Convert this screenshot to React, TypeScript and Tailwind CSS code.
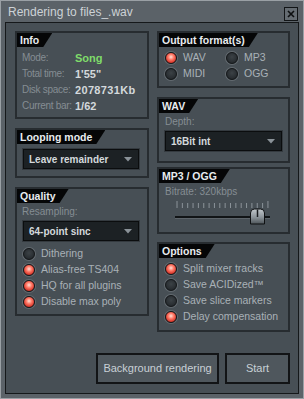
import type { ReactNode } from "react"

function Tab({ children }: { children: ReactNode }) {
  return (
    <div className="self-start h-[14px] leading-[14px] bg-[#050607] text-[#e8ecef] font-bold text-[10.5px] pl-[3px] pr-[13px] [clip-path:polygon(0_0,100%_0,calc(100%-9px)_100%,0_100%)]">
      {children}
    </div>
  )
}

function Panel({ title, className, children }: { title: string; className: string; children?: ReactNode }) {
  return (
    <div className={`flex flex-col border-2 border-[#272c30] bg-[#474f55] ${className}`}>
      <Tab>{title}</Tab>
      {children}
    </div>
  )
}

function Radio({ on, label }: { on?: boolean; label: string }) {
  return (
    <div className="flex items-center h-[16px] gap-[6px]">
      <div
        className={`w-[12px] h-[12px] shrink-0 rounded-full border border-[#15181a] shadow-[0_0_0_1px_#636a70] ${
          on
            ? "bg-[radial-gradient(circle_at_50%_40%,#ffe0d6_0%,#ff7a68_35%,#d8382c_70%,#8e1a12_100%)]"
            : "bg-[radial-gradient(circle_at_50%_40%,#3c4246_0%,#2a2f33_60%,#1c2023_100%)]"
        }`}
      />
      <span className="text-[10.5px] text-[#a9b1b7] whitespace-nowrap">{label}</span>
    </div>
  )
}

function Dropdown({ value, className }: { value: string; className: string }) {
  return (
    <div
      className={`flex items-center justify-between h-[20px] bg-[#1c2124] border border-[#0b0d0e] shadow-[0_0_0_1px_#343a3f] pl-[5px] pr-[6px] ${className}`}
    >
      <span className="text-[10px] font-bold text-[#d4d9dc]">{value}</span>
      <svg width="8" height="5" viewBox="0 0 8 5">
        <path d="M0 0 H8 L4 4.5 Z" fill="#8a9298" />
      </svg>
    </div>
  )
}

function BitrateSlider() {
  const ticks = Array.from({ length: 18 }, (_, i) => 4 + i * 5.35)
  return (
    <svg width="100" height="25" viewBox="0 0 100 25" className="ml-[14px] mt-[1px]">
      {ticks.map((x, i) => (
        <line
          key={i}
          x1={x}
          x2={x}
          y1={i === 0 || i === ticks.length - 1 ? 0 : 2}
          y2={7}
          stroke="#8b9399"
          strokeWidth="1"
        />
      ))}
      <line x1="2" x2="97" y1="16" y2="16" stroke="#111416" strokeWidth="2" />
      <line x1="2" x2="97" y1="17.5" y2="17.5" stroke="#5d646a" strokeWidth="1" />
      <defs>
        <linearGradient id="knob" x1="0" y1="0" x2="0" y2="1">
          <stop offset="0" stopColor="#c2c8cc" />
          <stop offset="0.55" stopColor="#8b9399" />
          <stop offset="1" stopColor="#4c5358" />
        </linearGradient>
      </defs>
      <path d="M77.5 23 V12 Q77.5 8 81.5 8 H87.5 Q91.5 8 91.5 12 V23 Z" fill="url(#knob)" stroke="#0f1113" strokeWidth="1" />
      <line x1="84.5" x2="84.5" y1="8.5" y2="16" stroke="#1a1d20" strokeWidth="1.5" />
    </svg>
  )
}

export default function App() {
  const infoLabel = "text-[10px] text-[#858d93] whitespace-nowrap tracking-[-0.03em]"
  const infoValue = "text-[11px] font-bold text-[#d4d9dc]"

  return (
    <div className="w-[304px] h-[399px] flex flex-col bg-[#5b6268] border border-[#9aa0a5] px-[4px] pb-[4px] font-['Liberation_Sans',Arial,sans-serif]">
      {/* title bar */}
      <div className="h-[21px] flex items-center justify-between pl-[3px] pr-[1px]">
        <span className="text-[12px] text-[#cdd2d6] leading-none">Rendering to files_.wav</span>
        <div className="w-[14px] h-[14px] mt-[4px] border border-[#121517] bg-[#656c72] flex items-center justify-center">
          <svg width="8" height="8" viewBox="0 0 8 8">
            <path d="M1 1 L7 7 M7 1 L1 7" stroke="#0d0f10" strokeWidth="1.6" />
          </svg>
        </div>
      </div>

      {/* body */}
      <div className="flex-1 border border-[#15181a] bg-[#474f55] pl-[9px] pt-[8px]">
        <div className="w-[275px] flex flex-col">
          <div className="flex gap-[8px]">
            {/* left column */}
            <div className="w-[134px] flex flex-col gap-[9px]">
              <Panel title="Info" className="h-[88px]">
                <div className="grid grid-cols-[53px_1fr] pl-[5px] mt-[3px] leading-[16px]">
                  <span className={infoLabel}>Mode:</span>
                  <span className="text-[11px] font-bold text-[#7fdc6a]">Song</span>
                  <span className={infoLabel}>Total time:</span>
                  <span className={infoValue}>{"1'55\""}</span>
                  <span className={infoLabel}>Disk space:</span>
                  <span className={`${infoValue} tracking-[0.03em]`}>2078731Kb</span>
                  <span className={infoLabel}>Current bar:</span>
                  <span className={infoValue}>1/62</span>
                </div>
              </Panel>

              <Panel title="Looping mode" className="h-[50px]">
                <Dropdown value="Leave remainder" className="w-[116px] ml-[6px] mt-[5px]" />
              </Panel>

              <Panel title="Quality" className="h-[129px]">
                <span className="text-[10px] text-[#858d93] leading-[16px] pl-[5px] mt-[1px]">Resampling:</span>
                <Dropdown value="64-point sinc" className="w-[116px] ml-[6px] mt-[1px]" />
                <div className="flex flex-col pl-[6px] mt-[5px]">
                  <Radio label="Dithering" />
                  <Radio on label="Alias-free TS404" />
                  <Radio on label="HQ for all plugins" />
                  <Radio on label="Disable max poly" />
                </div>
              </Panel>
            </div>

            {/* right column */}
            <div className="w-[133px] flex flex-col">
              <Panel title="Output format(s)" className="h-[57px]">
                <div className="grid grid-cols-[61px_1fr] pl-[6px] mt-[3px]">
                  <Radio on label="WAV" />
                  <Radio label="MP3" />
                  <Radio label="MIDI" />
                  <Radio label="OGG" />
                </div>
              </Panel>

              <Panel title="WAV" className="h-[66px] mt-[9px]">
                <span className="text-[10px] text-[#858d93] leading-[16px] pl-[6px] mt-[1px]">Depth:</span>
                <Dropdown value="16Bit int" className="w-[117px] ml-[6px] mt-[1px]" />
              </Panel>

              <Panel title="MP3 / OGG" className="h-[67px] mt-[4px]">
                <span className="text-[10px] text-[#858d93] leading-[16px] pl-[6px] mt-[1px]">Bitrate: 320kbps</span>
                <BitrateSlider />
              </Panel>

              <Panel title="Options" className="h-[90px] mt-[8px]">
                <div className="flex flex-col pl-[6px] mt-[3px]">
                  <Radio on label="Split mixer tracks" />
                  <Radio label="Save ACIDized™" />
                  <Radio label="Save slice markers" />
                  <Radio on label="Delay compensation" />
                </div>
              </Panel>
            </div>
          </div>

          {/* buttons */}
          <div className="flex justify-end gap-[6px] mt-[21px]">
            <button className="w-[123px] h-[31px] bg-[#4f575d] border-2 border-[#121416] text-[11px] text-[#c8d0d6]">
              Background rendering
            </button>
            <button className="w-[65px] h-[31px] bg-[#4f575d] border-2 border-[#121416] text-[11px] text-[#c8d0d6]">
              Start
            </button>
          </div>
        </div>
      </div>
    </div>
  )
}
